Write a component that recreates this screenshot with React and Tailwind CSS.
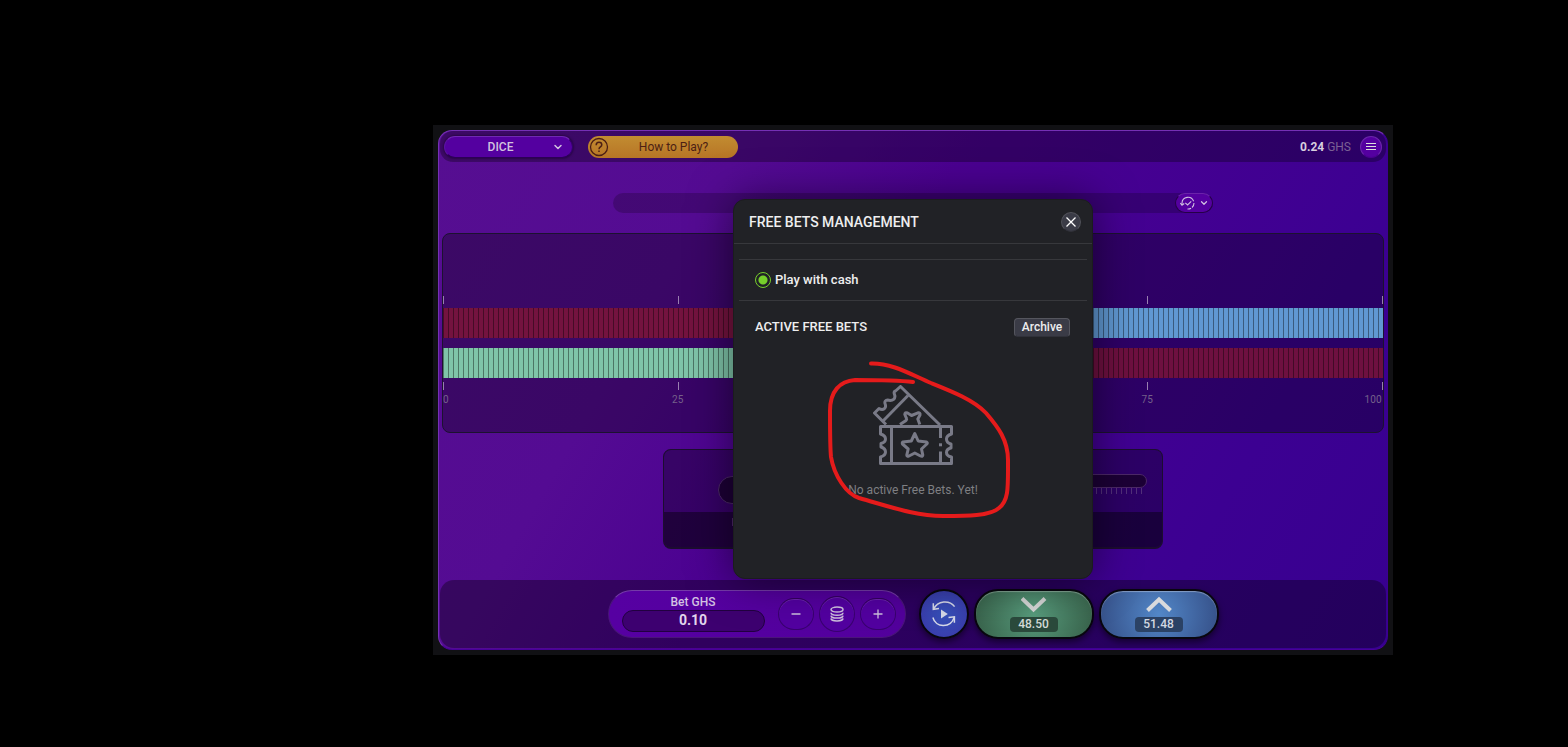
import { ChevronDown } from 'lucide-react';

const ticks = [0, 25, 50, 75, 100];

function TickRow() {
  return (
    <div className="flex h-2 justify-between">
      {ticks.map((t) => (
        <span key={t} className="w-px bg-[#9980b0]" />
      ))}
    </div>
  );
}

function Stripes({ left, right, split }) {
  return (
    <div className="relative flex h-[30px]">
      <div className={left} style={{ width: `${split}%` }} />
      <div className={`flex-1 ${right}`} />
      <div className="absolute inset-0 bg-[repeating-linear-gradient(90deg,rgba(0,0,0,0.4)_0px,rgba(0,0,0,0.4)_1px,transparent_1px,transparent_5px)]" />
    </div>
  );
}

function Header() {
  return (
    <header className="mx-px flex h-[31px] items-center rounded-[13px] bg-black/30 px-1 text-xs">
      <button className="flex h-[22px] w-[129px] items-center rounded-full border border-t-[#7128b4] border-r-[#340069] border-b-[#2c0057] border-l-[#5b12a2] bg-[#5400a0] pr-2 pl-1 font-medium text-[#d2c3df] shadow-[0_0_2px_1px_rgba(0,0,0,0.3)]">
        <span className="flex-1 text-center">DICE</span>
        <ChevronDown size={12} strokeWidth={3} />
      </button>
      <button className="ml-[15px] flex h-[22px] w-[150px] items-center rounded-full bg-linear-to-b from-[#c28c31] to-[#b77526] pl-px text-[#4c1f14]">
        <svg width="20" height="20" viewBox="0 0 20 20" fill="none" stroke="currentColor">
          <circle cx="10" cy="10" r="8.5" strokeWidth="1.3" />
          <path d="M7.2 8.2C7.2 6.2 8.4 5.2 10 5.2S12.8 6.3 12.8 7.8C12.8 10 10 9.9 10 12.2" strokeWidth="1.5" />
          <path d="M10 13.5V15" strokeWidth="1.5" />
        </svg>
        <span className="flex-1 text-center">How to Play?</span>
      </button>
      <p className="ml-auto text-[#7c6094]">
        <b className="font-bold text-[#d7cfdf]">0.24</b> GHS
      </p>
      <button aria-label="Menu" className="ml-[9px] flex size-[22px] items-center justify-center rounded-full border border-[#6c25ab] border-b-[#4a008e] bg-[#5400a0]">
        <svg width="10" height="9" viewBox="0 0 10 9" stroke="#ddd" strokeWidth="1">
          <path d="M0 1.5H10M0 4.5H10M0 7.5H10" />
        </svg>
      </button>
    </header>
  );
}

function History() {
  return (
    <div className="mx-auto mt-[31px] flex h-5 w-[600px] max-w-full justify-end rounded-full bg-black/20">
      <button aria-label="Bet history" className="flex h-5 w-[38px] items-center justify-center gap-1 rounded-full border border-[#250047] border-t-[#6b22aa] bg-[#5400a0] text-[#d0c0e0]">
        <svg width="15" height="14" viewBox="0 0 15 14" fill="none" stroke="currentColor" strokeWidth="1.1">
          <path d="M2 8.5V7A6 6 0 0 1 13.6 5.2" />
          <path d="M14 7A6 6 0 0 1 7.5 13" strokeDasharray="5 1.2" />
          <path d="M0.3 7L2 9.2L4.2 7.5" />
          <path d="M5.3 6.8L7.6 9L11.2 5.3" />
        </svg>
        <ChevronDown size={10} strokeWidth={3} />
      </button>
    </div>
  );
}

function Board() {
  return (
    <div className="mx-[3px] mt-5 h-[200px] overflow-hidden rounded-lg border border-[#1c1230] bg-black/30 pt-[62px]">
      <TickRow />
      <div className="my-1 flex flex-col gap-[10px]">
        <Stripes left="bg-[#74133f]" right="bg-[#6098d2]" split={51.48} />
        <Stripes left="bg-[#7fc4a9]" right="bg-[#6e1040]" split={48.5} />
      </div>
      <TickRow />
      <div className="mt-1 grid grid-cols-4 pr-px text-[10px] leading-3 tracking-wide text-[#75608a]">
        <span>0</span>
        <span className="-ml-10 w-20 text-center">25</span>
        <span className="-ml-10 w-20 text-center">50</span>
        <span className="flex justify-between">
          <span className="-ml-10 w-20 text-center">75</span>
          <span>100</span>
        </span>
      </div>
    </div>
  );
}

function ChancePanel() {
  return (
    <div className="mx-auto mt-4 w-[500px] max-w-full overflow-hidden rounded-lg border border-b-2 border-[#1c0d30] bg-black/30">
      <div className="flex h-[62px] items-start pr-[15px] pl-[54px]">
        <div className="mt-[26px] h-7 w-24 rounded-full border border-[#4c2868] bg-[#1d0036]" />
        <div className="mt-6 ml-auto w-72">
          <div className="h-[14px] rounded-full border border-[#4c2868] bg-[#1c0036]" />
          <div className="mr-[5px] ml-2 h-[6px] bg-[repeating-linear-gradient(270deg,#52307a_0px,#52307a_1px,transparent_1px,transparent_5px)]" />
        </div>
      </div>
      <div className="flex h-[35px] items-center bg-black/40 pb-4 pl-[68px]">
        <span className="h-2 w-px bg-[#4c2868]" />
      </div>
    </div>
  );
}

function RoundButton({ label, size, children }) {
  return (
    <button aria-label={label} className={`flex items-center justify-center rounded-full border border-[#39006f] border-t-[#34005f] bg-[#5200a0] text-[#cdbfdc] shadow-[inset_0_1px_0_#6b24ac] ${size}`}>
      {children}
    </button>
  );
}

function BetControls() {
  return (
    <footer className="mx-px mt-[31px] flex h-[68px] items-center justify-center rounded-[14px] bg-black/35">
      <div className="flex h-12 w-[298px] items-center rounded-full border border-[#4a157a] border-t-[#743aa8] bg-linear-to-r from-[#5600a2] to-[#52009c] pr-[9px] pl-[13px]">
        <label className="flex w-[143px] flex-col pb-[2px] text-center text-xs leading-4 font-medium text-[#d3c2e2]">
          Bet GHS
          <input
            type="text"
            defaultValue="0.10"
            className="h-[22px] w-full rounded-full border border-[#210040] bg-[#3d0070] pb-[2px] text-center text-sm font-bold text-[#e2d6ec]"
          />
        </label>
        <div className="ml-auto flex items-center gap-[5px]">
          <RoundButton label="Decrease bet" size="h-8 w-9">
            <svg width="10" height="10" viewBox="0 0 10 10" stroke="currentColor" strokeWidth="1.5">
              <path d="M0.5 5H9.5" />
            </svg>
          </RoundButton>
          <RoundButton label="Choose bet" size="size-9">
            <svg width="14" height="16" viewBox="0 0 14 16" fill="none" stroke="currentColor" strokeWidth="1.5">
              <ellipse cx="7" cy="3.6" rx="6" ry="2.5" />
              <path d="M1 6.7C1.2 10 12.8 10 13 6.7" />
              <path d="M1 9.6C1.2 12.9 12.8 12.9 13 9.6" />
              <path d="M1 12.4C1.2 15.7 12.8 15.7 13 12.4" />
            </svg>
          </RoundButton>
          <RoundButton label="Increase bet" size="h-8 w-9">
            <svg width="10" height="10" viewBox="0 0 10 10" stroke="currentColor" strokeWidth="1.3">
              <path d="M0.5 5H9.5M5 0.5V9.5" />
            </svg>
          </RoundButton>
        </div>
      </div>
      <button aria-label="Auto play" className="ml-[13px] flex size-[50px] items-center justify-center rounded-full border-2 border-[#08060f] bg-[radial-gradient(circle,#3551b9,#3b36a8)] text-[#d6d9e8] shadow-[0_3px_6px_rgba(0,0,0,0.5)]">
        <svg width="24" height="26" viewBox="0 0 24 26" fill="none" stroke="currentColor" strokeWidth="1.5">
          <path d="M1.8 8C5.500 -0.800 17.500 -1.200 22.600 5.600" />
          <path d="M1.300 2.300V8.300L7 7.600" />
          <path d="M0.900 16.500C3.500 26.800 18.500 27.500 22.200 16.500" />
          <path d="M16.500 16.600L22.400 15.800V21.800" />
          <path d="M9 8.500V17.500L15.800 13Z" fill="currentColor" stroke="none" />
        </svg>
      </button>
      <button className="ml-[5px] flex h-[50px] w-[120px] flex-col items-center justify-center rounded-3xl border-2 border-[#08060f] bg-[radial-gradient(circle,#579b7c,#376049)] text-xs font-medium text-[#d5dcd8] shadow-[0_3px_6px_rgba(0,0,0,0.5),inset_0_1px_1px_rgba(255,255,255,0.35)]">
        <svg width="26" height="17" viewBox="0 0 26 17" fill="none" stroke="#d3d4d4" strokeWidth="4">
          <path d="M1 2.500L12.500 13.500L24 2.500" />
        </svg>
        <span className="mt-1 w-12 rounded bg-[#2b4a3c] leading-[15px]">48.50</span>
      </button>
      <button className="ml-[5px] flex h-[50px] w-[120px] flex-col items-center justify-center rounded-3xl border-2 border-[#08060f] bg-[radial-gradient(circle,#5287c8,#354f87)] text-xs font-medium text-[#d3d9e2] shadow-[0_3px_6px_rgba(0,0,0,0.5),inset_0_1px_1px_rgba(255,255,255,0.35)]">
        <svg width="26" height="17" viewBox="0 0 26 17" fill="none" stroke="#d9dadd" strokeWidth="4">
          <path d="M1.500 14.500L13 3.500L24.500 14.500" />
        </svg>
        <span className="mt-1 w-12 rounded bg-[#2b4265] leading-[15px]">51.48</span>
      </button>
    </footer>
  );
}

function TicketsIcon() {
  return (
    <svg width="80" height="80" viewBox="0 0 80 80" fill="none" stroke="#797a87" strokeWidth="3" strokeLinejoin="round">
      <path d="M13 39.500L1.500 28L6 23.500C10 26 14 23.500 12 18.500C11.500 16.500 12.500 15 14.500 15C20 16.500 23 13.500 21.500 9.500C20.800 7.500 21 6.500 22.500 6L27.500 1.500L67 40" />
      <path d="M10 36L35 10.500" />
      <path d="M27 39.500L33 35.500Q34 34.500 33.500 33.500L31.800 29.500Q31.800 27 34.500 28L38.500 30.500L45 27.800Q47.500 27.500 47 30L44.800 34L46.800 39.500" />
      <path d="M7.500 41.500H78.500V49Q73.500 50.500 73.500 54Q73.500 58 78 59V63Q73.500 64 73.500 67.500Q73.500 71 78.500 72V78.500H7.500V72Q12.500 70.500 12.500 67Q12.500 63.500 8 62V58.500Q12.500 57.500 12.500 54Q12.500 50.500 7.500 49Z" />
      <path d="M18.500 41.500V78.500" />
      <path d="M67.500 43V53M67.500 66.500V78" />
      <path d="M67.500 58.300V61.300" />
      <path d="M41.800 48.500L45.200 56L53.500 57Q55 58 53.800 59L48.500 64L49.800 70Q49.500 72 47.500 71L41.800 68L36 71Q34 72 33.800 70L35.200 64L29.500 59Q28.800 57.500 30 57L38.300 56Z" />
    </svg>
  );
}

function FreeBetsDialog() {
  return (
    <section role="dialog" aria-labelledby="free-bets-title" className="relative flex h-[380px] w-[360px] flex-col rounded-xl border border-[#1b1c1e] bg-[#212226] text-[#eeeeef] shadow-[0_0_44px_rgba(0,0,0,0.5)]">
      <div className="flex h-11 items-center justify-between border-b border-[#37383c] pr-[11px] pl-[15px]">
        <h2 id="free-bets-title" className="text-sm font-medium">FREE BETS MANAGEMENT</h2>
        <button aria-label="Close" className="flex size-5 items-center justify-center rounded-full border border-[#505158] border-b-[#303139] bg-[#3a3b46]">
          <svg width="10" height="10" viewBox="0 0 10 10" stroke="#fff" strokeWidth="1.3">
            <path d="M0.500 0.500L9.500 9.500M9.500 0.500L0.500 9.500" />
          </svg>
        </button>
      </div>
      <div className="mx-[5px] mt-[15px] flex h-[42px] items-center border-y border-[#37383c] px-4">
        <label className="flex items-center gap-1 text-[13px] font-medium">
          <input
            type="radio"
            name="mode"
            defaultChecked
            className="size-4 appearance-none rounded-full border border-[#76d02b] bg-[radial-gradient(circle,#76d02b_4px,transparent_5px)]"
          />
          Play with cash
        </label>
      </div>
      <div className="mt-4 flex items-center justify-between pr-[22px] pl-[21px] font-medium">
        <h3 className="text-[13px] leading-5">ACTIVE FREE BETS</h3>
        <button className="h-[19px] w-14 rounded border border-[#55565e] border-b-[#303139] bg-[#3a3b46] text-xs leading-4">Archive</button>
      </div>
      <div className="mt-12 flex flex-col items-center gap-[17px] text-xs text-[#7e7f82]">
        <TicketsIcon />
        <p>No active Free Bets. Yet!</p>
      </div>
      <svg className="pointer-events-none absolute -inset-px" width="360" height="380" viewBox="733 199 360 380" fill="none" stroke="#e51b1b" strokeWidth="4" strokeLinecap="round">
        <path d="M871 363.500C892 363 910 374 931 383C951 391 974 400 986 413C998 427 1008 440 1008 460C1008 487 1009 500 999 508C990 516 967 516 943 516C915 516 888 506 859 498C846 494 834 475 831 457C830 447 830 426 830 411C830 391 840 381 855 380C875 380 896 380 913 382" />
      </svg>
    </section>
  );
}

export default function App() {
  return (
    <main className="min-h-screen bg-black pt-[125px] pr-[175px] pl-[433px] font-['Roboto',sans-serif]">
      <div className="relative bg-[#111114] p-[5px]">
        <div className="overflow-hidden rounded-[14px] border border-t-[#7530b5] border-r-[#3c0092] border-b-[#480099] border-l-[#7530b5] bg-[linear-gradient(120deg,#560e91_0%,#540b93_25%,#4a0091_45%,#3c0092_80%,#370090_100%)] pb-px">
          <Header />
          <History />
          <Board />
          <ChancePanel />
          <BetControls />
        </div>
        <div className="absolute inset-0 flex items-center justify-center pb-[2px]">
          <FreeBetsDialog />
        </div>
      </div>
    </main>
  );
}
